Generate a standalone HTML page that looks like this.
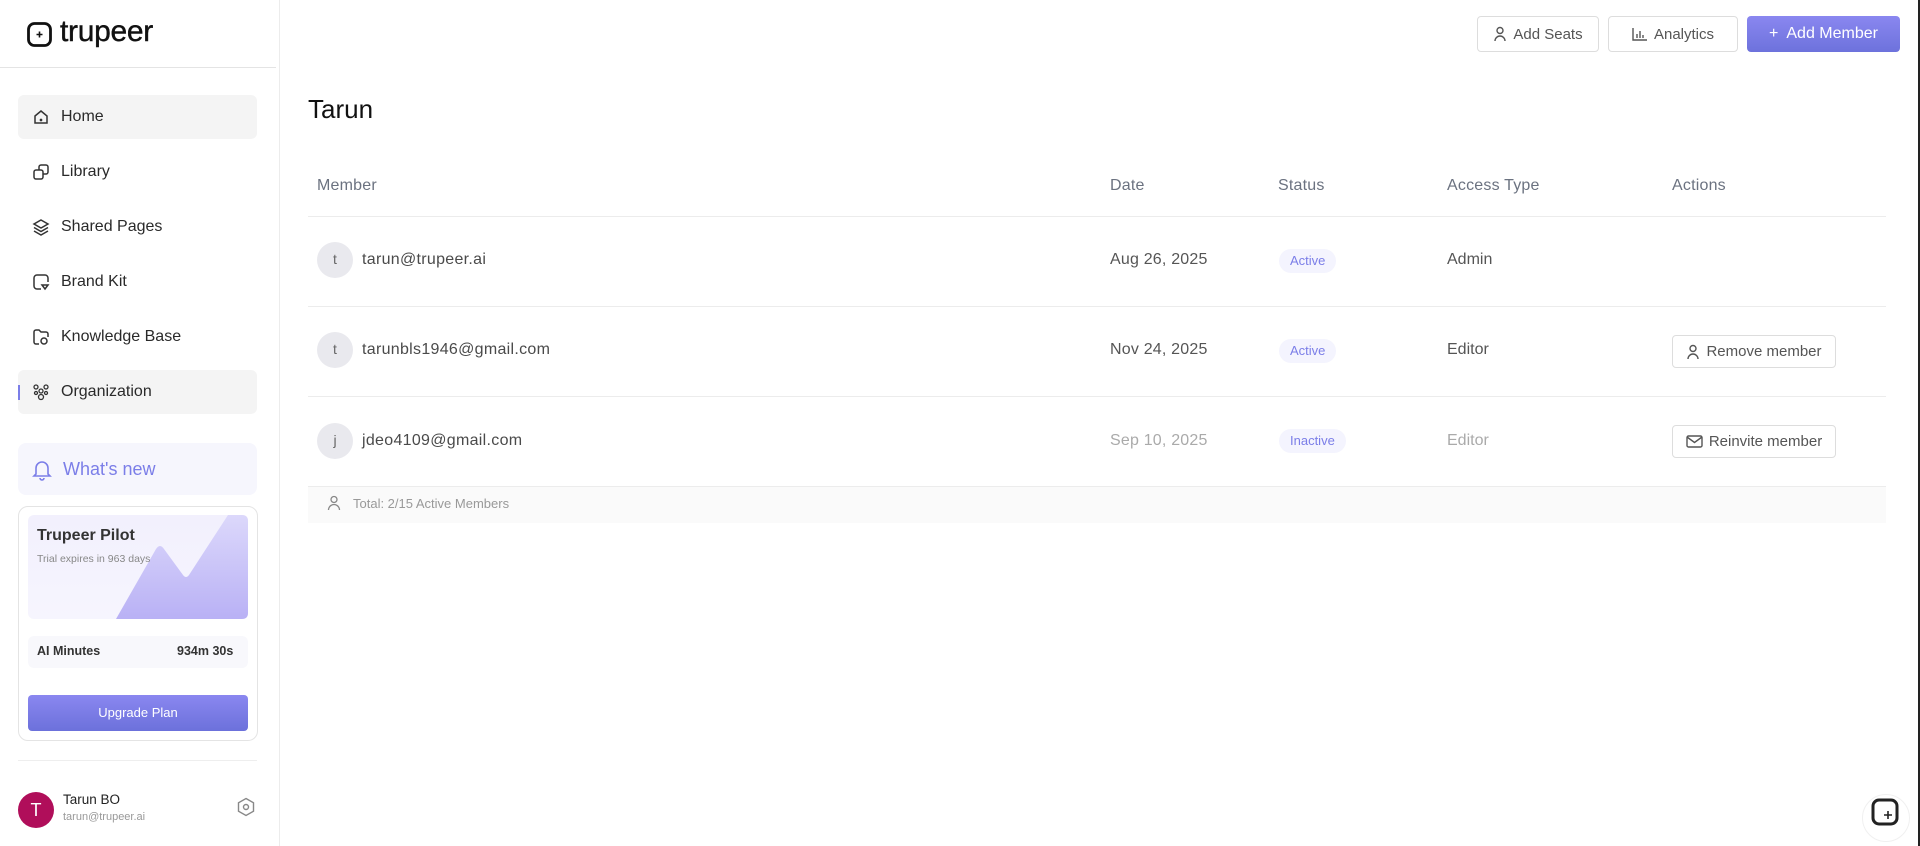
<!DOCTYPE html>
<html><head><meta charset="utf-8"><style>
*{box-sizing:border-box;margin:0;padding:0}
body{width:1920px;height:846px;overflow:hidden;background:#fff;font-family:"Liberation Sans",sans-serif;position:relative;color:#222}
.a{position:absolute}
.nav{position:absolute;left:18px;width:239px;height:44px;display:flex;align-items:center;font-size:16px;color:#2a2a2a;border-radius:6px}
.nav svg{position:absolute;left:14px}
.nav span{position:absolute;left:43px}
.th{position:absolute;top:177px;font-size:16px;color:#6b7280;letter-spacing:0.2px}
.hr{position:absolute;left:308px;width:1578px;height:1px;background:#ececec}
.av{position:absolute;left:317px;width:36px;height:36px;border-radius:50%;background:#e9e9ee;color:#666;font-size:14px;text-align:center;line-height:34px}
.em{position:absolute;left:362px;font-size:16px;color:#4a4a4a;letter-spacing:0.3px}
.dt{position:absolute;left:1110px;font-size:16px;color:#555;letter-spacing:0.2px}
.bd{position:absolute;left:1279px;height:24px;padding:0 11px;border-radius:12px;background:#f4f4fe;color:#7b7ee8;font-size:13px;line-height:24px}
.ac{position:absolute;left:1447px;font-size:16px;color:#555}
.btn{position:absolute;border:1px solid #ddd;border-radius:4px;background:#fff;color:#555;font-size:15px;display:flex;align-items:center;justify-content:center;gap:6px}
</style></head><body>
<div class="a" style="left:279px;top:0;width:1px;height:846px;background:#ececec"></div>
<svg class="a" style="left:27px;top:22px" width="25" height="25" viewBox="0 0 25 25"><rect x="1.5" y="1.5" width="22" height="22" rx="6" fill="none" stroke="#111" stroke-width="2.8"/><path d="M12.5 9.5v6M9.5 12.5h6" stroke="#111" stroke-width="1.6"/></svg>
<div class="a" style="left:60px;top:15px;font-size:30px;color:#111;letter-spacing:-0.3px;-webkit-text-stroke:0.4px #111">trupeer</div>
<div class="a" style="left:0;top:67px;width:276px;height:1px;background:#e4e4e4"></div>

<div class="nav" style="top:95px;background:#f4f4f4"><svg width="18" height="18" viewBox="0 0 18 18" fill="none" stroke="#333" stroke-width="1.5"><path d="M3 8l6-5 6 5v7H3z"/><circle cx="9" cy="12" r=".6" fill="#333"/></svg><span>Home</span></div>
<div class="nav" style="top:150px"><svg width="18" height="18" viewBox="0 0 18 18" fill="none" stroke="#333" stroke-width="1.5"><rect x="2" y="7" width="9" height="9" rx="2"/><path d="M7 7V4a2 2 0 012-2h5a2 2 0 012 2v5a2 2 0 01-2 2h-3"/></svg><span>Library</span></div>
<div class="nav" style="top:205px"><svg width="18" height="18" viewBox="0 0 18 18" fill="none" stroke="#333" stroke-width="1.5"><path d="M9 2l7 4-7 4-7-4z"/><path d="M2 9.5l7 4 7-4M2 13l7 4 7-4"/></svg><span>Shared Pages</span></div>
<div class="nav" style="top:260px"><svg width="18" height="18" viewBox="0 0 18 18" fill="none" stroke="#333" stroke-width="1.5"><path d="M9 16H5a3 3 0 01-3-3V5a3 3 0 013-3h8a3 3 0 013 3v4"/><path d="M10 12l3 4 3-4z"/></svg><span>Brand Kit</span></div>
<div class="nav" style="top:315px"><svg width="18" height="18" viewBox="0 0 18 18" fill="none" stroke="#333" stroke-width="1.5"><path d="M7 16H4a2 2 0 01-2-2V4a2 2 0 012-2h3l2 2h5a2 2 0 012 2v3"/><circle cx="12" cy="13" r="3"/></svg><span>Knowledge Base</span></div>
<div class="nav" style="top:370px;background:#f4f4f4"><div class="a" style="left:0;top:15px;width:2px;height:15px;background:#7b7ee8"></div><svg width="18" height="18" viewBox="0 0 18 18" fill="none" stroke="#333" stroke-width="1.3"><circle cx="4" cy="4" r="2"/><circle cx="14" cy="4" r="2"/><circle cx="9" cy="8" r="2"/><circle cx="9" cy="14" r="2.5"/><circle cx="4" cy="10" r="1.5"/><circle cx="14" cy="10" r="1.5"/></svg><span>Organization</span></div>

<div class="a" style="left:18px;top:443px;width:239px;height:52px;background:#f6f6fd;border-radius:8px"></div>
<svg class="a" style="left:32px;top:459px" width="20" height="22" viewBox="0 0 20 22" fill="none" stroke="#7b7ee8" stroke-width="1.6"><path d="M4 15V9a6 6 0 0112 0v6l2 2H2z"/><path d="M8 19a2 2 0 004 0"/></svg>
<div class="a" style="left:63px;top:459px;font-size:18px;color:#7b7ee8">What's new</div>

<div class="a" style="left:18px;top:506px;width:240px;height:235px;border:1px solid #e4e4e4;border-radius:10px"></div>
<svg class="a" style="left:28px;top:515px" width="220" height="104" viewBox="0 0 220 104"><defs><linearGradient id="g" x1="0" y1="0" x2="0" y2="1"><stop offset="0" stop-color="#f2f0fd"/><stop offset="1" stop-color="#f6f5fe"/></linearGradient><linearGradient id="h" x1="0" y1="0" x2="0" y2="1"><stop offset="0" stop-color="#dcd8fb"/><stop offset="1" stop-color="#b9b1f5"/></linearGradient></defs><rect width="220" height="104" rx="6" fill="url(#g)"/><path d="M88 104L128 34Q132 28 136 34L155 60Q158 64 161 60L200 0H214Q220 0 220 6V98Q220 104 214 104Z" fill="url(#h)"/></svg>
<div class="a" style="left:37px;top:527px;font-size:16px;font-weight:bold;color:#333">Trupeer Pilot</div>
<div class="a" style="left:37px;top:553px;font-size:10.5px;color:#888">Trial expires in 963 days</div>
<div class="a" style="left:28px;top:636px;width:220px;height:32px;background:#f8f8fc;border-radius:6px"></div>
<div class="a" style="left:37px;top:644px;font-size:12.5px;font-weight:bold;color:#333">AI Minutes</div>
<div class="a" style="left:177px;top:644px;font-size:12.5px;font-weight:bold;color:#333">934m 30s</div>
<div class="a" style="left:28px;top:695px;width:220px;height:36px;border-radius:4px;background:linear-gradient(#8a87f0,#6c71db);color:#fff;font-size:13px;text-align:center;line-height:36px">Upgrade Plan</div>
<div class="a" style="left:18px;top:760px;width:239px;height:1px;background:#eee"></div>
<div class="a" style="left:18px;top:792px;width:36px;height:36px;border-radius:50%;background:#b00e5a;color:#fff;font-size:18px;text-align:center;line-height:36px">T</div>
<div class="a" style="left:63px;top:792px;font-size:13.5px;color:#222">Tarun BO</div>
<div class="a" style="left:63px;top:811px;font-size:11px;color:#999">tarun@trupeer.ai</div>
<svg class="a" style="left:236px;top:797px" width="20" height="20" viewBox="0 0 20 20" fill="none" stroke="#888" stroke-width="1.4"><path d="M10 1.5l7.5 4.25v8.5L10 18.5l-7.5-4.25v-8.5z"/><circle cx="10" cy="10" r="2.5"/></svg>

<div class="btn" style="left:1477px;top:16px;width:122px;height:36px"><svg width="14" height="16" viewBox="0 0 14 16" fill="none" stroke="#555" stroke-width="1.4"><circle cx="7" cy="4.5" r="3"/><path d="M2 15a5 5 0 0110 0"/></svg>Add Seats</div>
<div class="btn" style="left:1608px;top:16px;width:130px;height:36px"><svg width="16" height="14" viewBox="0 0 16 14" fill="none" stroke="#555" stroke-width="1.4"><path d="M1 1v12h14M5 11V7M8 11V4M11 11V8"/></svg>Analytics</div>
<div class="a" style="left:1747px;top:16px;width:153px;height:36px;border-radius:4px;background:linear-gradient(#8a87f0,#6d72dc);color:#fff;font-size:16px;text-align:center;line-height:36px">+&nbsp; Add Member</div>

<div class="a" style="left:308px;top:94px;font-size:26px;color:#111">Tarun</div>

<div class="th" style="left:317px">Member</div>
<div class="th" style="left:1110px">Date</div>
<div class="th" style="left:1278px">Status</div>
<div class="th" style="left:1447px">Access Type</div>
<div class="th" style="left:1672px">Actions</div>
<div class="hr" style="top:216px"></div>
<div class="hr" style="top:306px"></div>
<div class="hr" style="top:396px"></div>
<div class="a" style="left:308px;top:486px;width:1578px;height:37px;background:#fafafa;border-top:1px solid #ececec"></div>

<div class="av" style="top:242px">t</div><div class="em" style="top:251px">tarun@trupeer.ai</div>
<div class="dt" style="top:251px">Aug 26, 2025</div><div class="bd" style="top:249px">Active</div><div class="ac" style="top:251px">Admin</div>

<div class="av" style="top:332px">t</div><div class="em" style="top:341px">tarunbls1946@gmail.com</div>
<div class="dt" style="top:341px">Nov 24, 2025</div><div class="bd" style="top:339px">Active</div><div class="ac" style="top:341px">Editor</div>
<div class="btn" style="left:1672px;top:335px;width:164px;height:33px"><svg width="14" height="16" viewBox="0 0 14 16" fill="none" stroke="#555" stroke-width="1.4"><circle cx="7" cy="4.5" r="3"/><path d="M2 15a5 5 0 0110 0"/></svg>Remove member</div>

<div class="av" style="top:423px">j</div><div class="em" style="top:432px">jdeo4109@gmail.com</div>
<div class="dt" style="top:432px;color:#aaa">Sep 10, 2025</div><div class="bd" style="top:429px">Inactive</div><div class="ac" style="top:432px;color:#aaa">Editor</div>
<div class="btn" style="left:1672px;top:425px;width:164px;height:33px"><svg width="17" height="13" viewBox="0 0 17 13" fill="none" stroke="#555" stroke-width="1.4"><rect x="1" y="1" width="15" height="11" rx="1.5"/><path d="M1 2l7.5 5.5L16 2"/></svg>Reinvite member</div>

<svg class="a" style="left:327px;top:495px" width="14" height="16" viewBox="0 0 14 16" fill="none" stroke="#888" stroke-width="1.3"><circle cx="7" cy="4.5" r="3"/><path d="M1.5 15a5.5 5.5 0 0111 0"/></svg>
<div class="a" style="left:353px;top:496px;font-size:13px;color:#999">Total: 2/15 Active Members</div>

<div class="a" style="left:1862px;top:794px;width:48px;height:48px;border-radius:50%;background:#fff;border:1px solid #f0f0f0"></div>
<svg class="a" style="left:1870px;top:797px" width="30" height="30" viewBox="0 0 30 30"><rect x="3" y="3" width="24" height="24" rx="6" fill="none" stroke="#222" stroke-width="3"/><path d="M18 14v8M14 18h8" stroke="#222" stroke-width="1.6"/></svg>
<div class="a" style="left:1918px;top:0;width:2px;height:846px;background:#222"></div>
</body></html>
